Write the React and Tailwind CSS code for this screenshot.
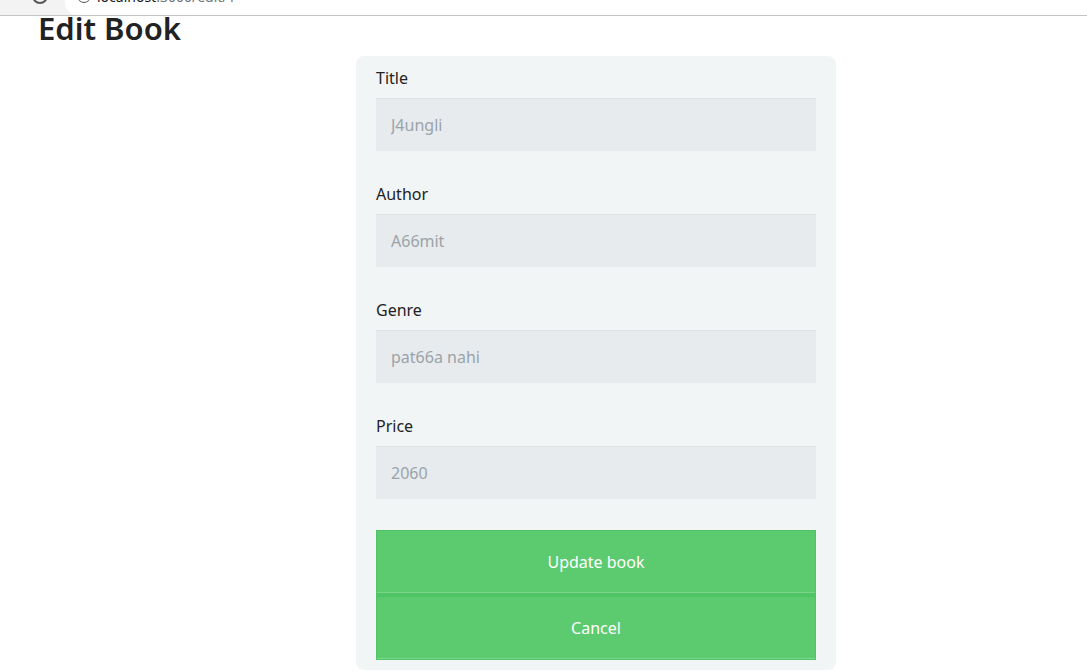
import { useState } from 'react';

const fields = [
  { name: 'title', label: 'Title', value: 'J4ungli' },
  { name: 'author', label: 'Author', value: 'A66mit' },
  { name: 'genre', label: 'Genre', value: 'pat66a nahi' },
  { name: 'price', label: 'Price', value: '2060' },
];

export default function App() {
  const [book, setBook] = useState({ title: '', author: '', genre: '', price: '' });

  const handleChange = (e) => {
    setBook(prev => ({ ...prev, [e.target.name]: e.target.value }));
  };

  return (
    <div className="min-h-[672px] bg-white text-[#212529]" style={{ fontFamily: '"Noto Sans", "Open Sans", sans-serif' }}>
      {/* browser chrome fragment */}
      <div className="h-[16px] bg-[#f3f3f3] border-b border-[#c4c4c4] flex items-end overflow-hidden">
        <div className="w-[65px] h-full relative">
          <div className="absolute left-[32px] top-[-12px] w-[16px] h-[16px] rounded-full border-2 border-[#555]" />
        </div>
        <div className="flex-1 h-full bg-white rounded-bl-[12px] relative overflow-hidden">
          <div className="absolute left-[12px] top-[-11px] w-[14px] h-[14px] rounded-full border-[1.5px] border-[#555]" />
          <div className="absolute left-[32px] top-[-12px] text-[14px] leading-[18px] whitespace-nowrap">
            <span className="text-[#202124]">localhost</span>
            <span className="text-[#70757a]">:3000/edit/1</span>
          </div>
        </div>
      </div>

      <h1 className="pl-[38px] text-[31px] font-semibold leading-[30px] mt-[-3px] text-[#222]">Edit Book</h1>

      <div className="flex mt-[13px] pl-[356px]">
        <form className="w-[480px] bg-[#f2f5f6] rounded-[8px] px-[20px] pt-[10px] pb-[10px]">
          {fields.map(f => (
            <div key={f.name} className="mb-[31px]">
              <label className="block text-[16px] leading-[24px] text-[#222] mb-[8px]">{f.label}</label>
              <input
                name={f.name}
                value={book[f.name]}
                onChange={handleChange}
                placeholder={f.value}
                className="block w-full h-[53px] bg-[#e7ebed] border-t border-[#dde2e4] px-[15px] text-[16px] outline-none placeholder:text-[#9aa3a9]"
              />
            </div>
          ))}

          <button
            type="submit"
            className="block w-full h-[65px] bg-[#5ccb70] border border-b-2 border-[#4fc464] shadow-[inset_0_-1px_0_rgba(255,255,255,0.2)] text-white text-[16px]"
          >
            Update book
          </button>
          <button
            type="button"
            className="block w-full h-[65px] bg-[#5ccb70] border border-t-2 border-[#4fc464] shadow-[inset_0_-1px_0_rgba(255,255,255,0.2)] text-white text-[16px]"
          >
            Cancel
          </button>
        </form>
      </div>
    </div>
  );
}
